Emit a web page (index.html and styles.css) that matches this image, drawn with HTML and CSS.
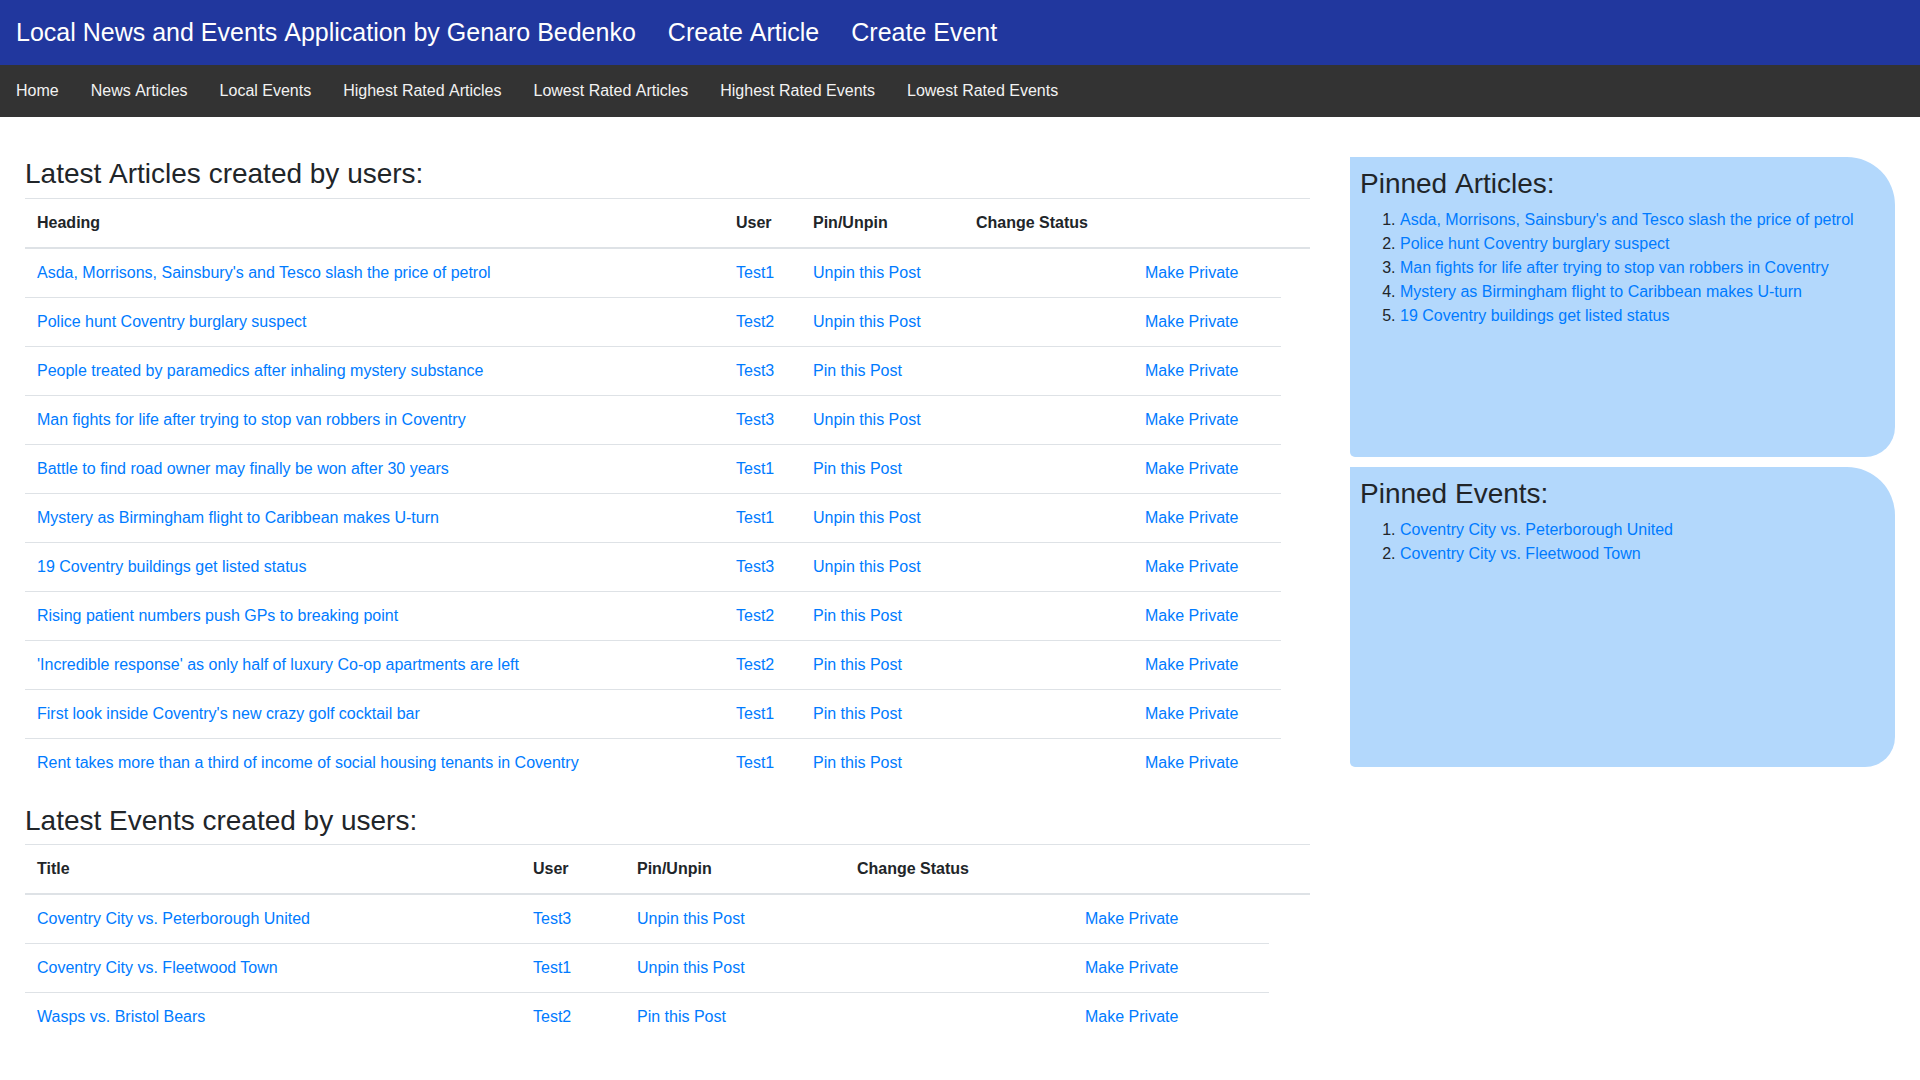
FILE: index.html
```html
<!DOCTYPE html>
<html lang="en">
<head>
<meta charset="utf-8">
<title>Local News and Events Application</title>
<link rel="stylesheet" href="styles.css">
</head>
<body>
<header class="topbar">
  <a class="top-link" href="#">Local News and Events Application by Genaro Bedenko</a>
  <a class="top-link" href="#">Create Article</a>
  <a class="top-link" href="#">Create Event</a>
</header>
<nav class="subnav">
  <a href="#">Home</a>
  <a href="#">News Articles</a>
  <a href="#">Local Events</a>
  <a href="#">Highest Rated Articles</a>
  <a href="#">Lowest Rated Articles</a>
  <a href="#">Highest Rated Events</a>
  <a href="#">Lowest Rated Events</a>
</nav>
<main class="page">
  <section class="main-col">
    <h3 class="section-title">Latest Articles created by users:</h3>
    <table class="table">
      <colgroup>
        <col class="a1"><col class="a2"><col class="a3"><col class="a4"><col class="a5"><col class="a6">
      </colgroup>
      <thead>
        <tr><th>Heading</th><th>User</th><th>Pin/Unpin</th><th>Change Status</th><th></th><th></th></tr>
      </thead>
      <tbody>
        <tr><td><a href="#">Asda, Morrisons, Sainsbury's and Tesco slash the price of petrol</a></td><td><a href="#">Test1</a></td><td><a href="#">Unpin this Post</a></td><td></td><td><a href="#">Make Private</a></td></tr>
        <tr><td><a href="#">Police hunt Coventry burglary suspect</a></td><td><a href="#">Test2</a></td><td><a href="#">Unpin this Post</a></td><td></td><td><a href="#">Make Private</a></td></tr>
        <tr><td><a href="#">People treated by paramedics after inhaling mystery substance</a></td><td><a href="#">Test3</a></td><td><a href="#">Pin this Post</a></td><td></td><td><a href="#">Make Private</a></td></tr>
        <tr><td><a href="#">Man fights for life after trying to stop van robbers in Coventry</a></td><td><a href="#">Test3</a></td><td><a href="#">Unpin this Post</a></td><td></td><td><a href="#">Make Private</a></td></tr>
        <tr><td><a href="#">Battle to find road owner may finally be won after 30 years</a></td><td><a href="#">Test1</a></td><td><a href="#">Pin this Post</a></td><td></td><td><a href="#">Make Private</a></td></tr>
        <tr><td><a href="#">Mystery as Birmingham flight to Caribbean makes U-turn</a></td><td><a href="#">Test1</a></td><td><a href="#">Unpin this Post</a></td><td></td><td><a href="#">Make Private</a></td></tr>
        <tr><td><a href="#">19 Coventry buildings get listed status</a></td><td><a href="#">Test3</a></td><td><a href="#">Unpin this Post</a></td><td></td><td><a href="#">Make Private</a></td></tr>
        <tr><td><a href="#">Rising patient numbers push GPs to breaking point</a></td><td><a href="#">Test2</a></td><td><a href="#">Pin this Post</a></td><td></td><td><a href="#">Make Private</a></td></tr>
        <tr><td><a href="#">'Incredible response' as only half of luxury Co-op apartments are left</a></td><td><a href="#">Test2</a></td><td><a href="#">Pin this Post</a></td><td></td><td><a href="#">Make Private</a></td></tr>
        <tr><td><a href="#">First look inside Coventry's new crazy golf cocktail bar</a></td><td><a href="#">Test1</a></td><td><a href="#">Pin this Post</a></td><td></td><td><a href="#">Make Private</a></td></tr>
        <tr><td><a href="#">Rent takes more than a third of income of social housing tenants in Coventry</a></td><td><a href="#">Test1</a></td><td><a href="#">Pin this Post</a></td><td></td><td><a href="#">Make Private</a></td></tr>
      </tbody>
    </table>

    <h3 class="section-title">Latest Events created by users:</h3>
    <table class="table">
      <colgroup>
        <col class="e1"><col class="e2"><col class="e3"><col class="e4"><col class="e5"><col class="e6">
      </colgroup>
      <thead>
        <tr><th>Title</th><th>User</th><th>Pin/Unpin</th><th>Change Status</th><th></th><th></th></tr>
      </thead>
      <tbody>
        <tr><td><a href="#">Coventry City vs. Peterborough United</a></td><td><a href="#">Test3</a></td><td><a href="#">Unpin this Post</a></td><td></td><td><a href="#">Make Private</a></td></tr>
        <tr><td><a href="#">Coventry City vs. Fleetwood Town</a></td><td><a href="#">Test1</a></td><td><a href="#">Unpin this Post</a></td><td></td><td><a href="#">Make Private</a></td></tr>
        <tr><td><a href="#">Wasps vs. Bristol Bears</a></td><td><a href="#">Test2</a></td><td><a href="#">Pin this Post</a></td><td></td><td><a href="#">Make Private</a></td></tr>
      </tbody>
    </table>
  </section>

  <aside class="side-col">
    <div class="pinned">
      <h3 class="pinned-title">Pinned Articles:</h3>
      <ol class="pinned-list">
        <li><a href="#">Asda, Morrisons, Sainsbury's and Tesco slash the price of petrol</a></li>
        <li><a href="#">Police hunt Coventry burglary suspect</a></li>
        <li><a href="#">Man fights for life after trying to stop van robbers in Coventry</a></li>
        <li><a href="#">Mystery as Birmingham flight to Caribbean makes U-turn</a></li>
        <li><a href="#">19 Coventry buildings get listed status</a></li>
      </ol>
    </div>
    <div class="pinned">
      <h3 class="pinned-title">Pinned Events:</h3>
      <ol class="pinned-list">
        <li><a href="#">Coventry City vs. Peterborough United</a></li>
        <li><a href="#">Coventry City vs. Fleetwood Town</a></li>
      </ol>
    </div>
  </aside>
</main>
</body>
</html>
```

FILE: styles.css
```css
* { box-sizing: border-box; }

body {
  margin: 0;
  font-family: "Liberation Sans", Arial, sans-serif;
  font-size: 16px;
  line-height: 1.5;
  color: #212529;
  background: #fff;
}

a { color: #007bff; text-decoration: none; }

.topbar {
  display: flex;
  align-items: center;
  height: 65px;
  padding-bottom: 2px;
  background: #21379e;
  font-kerning: none;
}

.top-link {
  color: #fff;
  font-size: 25px;
  line-height: 1.2;
  padding: 0 16px;
}

.subnav {
  display: flex;
  height: 52px;
  background: #333;
  font-kerning: none;
}

.subnav a {
  color: #f2f2f2;
  padding: 14px 16px;
  font-size: 16px;
  line-height: 24px;
}

.page {
  display: flex;
  align-items: flex-start;
  gap: 40px;
  padding: 40px 25px 0;
}

.main-col { width: 1285px; flex: none; }

.side-col { flex: 1; }

.section-title,
.pinned-title {
  margin: 0 0 7px;
  font-size: 28px;
  font-weight: 500;
  line-height: 1.2;
  color: #212529;
  font-kerning: none;
}

.table {
  width: 1285px;
  table-layout: fixed;
  border-collapse: collapse;
  margin-bottom: 17px;
}

.table th,
.table td {
  padding: 12px;
  vertical-align: top;
  border-top: 1px solid #dee2e6;
  text-align: left;
  white-space: nowrap;
}

.table thead th {
  vertical-align: bottom;
  border-bottom: 2px solid #dee2e6;
  font-weight: bold;
}

.a1 { width: 699px; }
.a2 { width: 77px; }
.a3 { width: 163px; }
.a4 { width: 169px; }
.a5 { width: 148px; }
.a6 { width: 29px; }

.e1 { width: 496px; }
.e2 { width: 104px; }
.e3 { width: 220px; }
.e4 { width: 228px; }
.e5 { width: 196px; }
.e6 { width: 41px; }

.pinned {
  height: 300px;
  padding: 10px;
  margin-bottom: 10px;
  background: #b3d8fc;
  border-radius: 0 48px 30px 5px;
}

.pinned-list {
  margin: 0 0 16px;
  padding-left: 40px;
}
```
